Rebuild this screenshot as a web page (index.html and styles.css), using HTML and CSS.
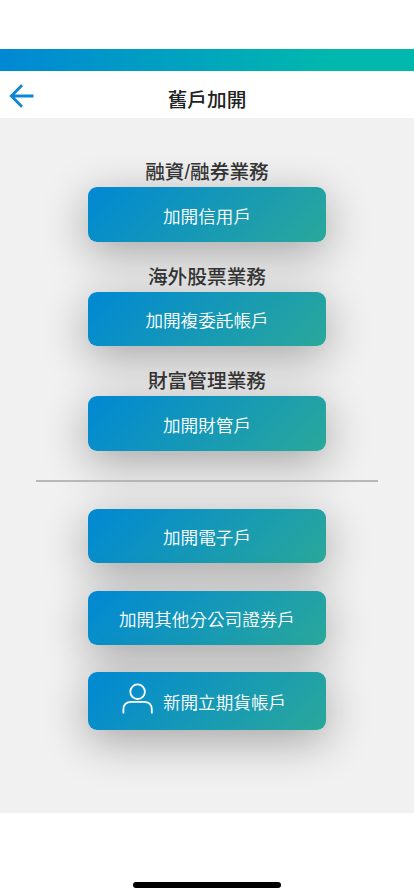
FILE: index.html
```html
<!DOCTYPE html>
<html lang="zh-Hant">
<head>
    <meta charset="UTF-8">
    <title>舊戶加開</title>
    <link rel="stylesheet" href="styles.css">
</head>
<body>
<div class="topBar"></div>
<div class="header">
    <a class="back" href="#">
        <svg width="26" height="26" viewBox="0 0 26 26">
            <path d="M14 2.2 L3.3 13 L14 23.8 M3.3 13 H25.5" fill="none" stroke="#0a88d0" stroke-width="2.8"/>
        </svg>
    </a>
    <h1>舊戶加開</h1>
</div>
<div class="content">
    <div class="group">
        <h2>融資/融券業務</h2>
        <a class="btn" href="#">加開信用戶</a>
    </div>
    <div class="group">
        <h2>海外股票業務</h2>
        <a class="btn" href="#">加開複委託帳戶</a>
    </div>
    <div class="group">
        <h2>財富管理業務</h2>
        <a class="btn" href="#">加開財管戶</a>
    </div>
    <hr>
    <div class="more">
        <a class="btn" href="#">加開電子戶</a>
        <a class="btn" href="#">加開其他分公司證券戶</a>
        <a class="btn btn-icon" href="#">
            <svg width="32" height="32" viewBox="0 0 32 32">
                <circle cx="15.6" cy="8.7" r="7.3"/>
                <path d="M1.4 30.5 V26.5 Q1.4 18.8 9.4 18.8 H22 Q29.8 18.8 29.8 26.5 V30.5"/>
            </svg>
            <span>新開立期貨帳戶</span>
        </a>
    </div>
</div>
<div class="footer">
    <div class="homeBar"></div>
</div>
</body>
</html>
```
FILE: styles.css
```css
* {
    margin: 0;
    padding: 0;
    box-sizing: border-box;
}

body {
    width: 414px;
    height: 896px;
    padding-top: 48.6px;
    background: #fff;
    font-family: "Noto Sans CJK TC", sans-serif;
    overflow: hidden;
}

a {
    text-decoration: none;
}

svg {
    display: block;
}

.topBar {
    height: 22.4px;
    background: linear-gradient(90deg, #0088d4, #00b8ae 80%);
}

.header {
    display: grid;
    grid-template-columns: 40px 1fr 40px;
    align-items: center;
    height: 47px;
}
.header .back {
    padding: 0 0 0 8px;
    margin-top: 3px;
}
.header h1 {
    text-align: center;
    font-size: 19.7px;
    line-height: 30px;
    font-weight: 500;
    color: #222;
    padding-top: 9px;
}

.content {
    height: 695px;
    padding-top: 39.5px;
    background: #f1f1f1;
}

.group {
    height: 104.5px;
}
.group h2 {
    height: 30px;
    line-height: 31px;
    text-align: center;
    font-family: "Liberation Sans", "Noto Sans CJK TC", sans-serif;
    font-size: 19.7px;
    font-weight: 500;
    color: #333;
}

.btn {
    display: flex;
    align-items: center;
    justify-content: center;
    width: 237.4px;
    height: 54.2px;
    margin: 0 auto;
    padding-top: 1px;
    border-radius: 9px;
    background: linear-gradient(135deg, #0088d4, #2aa89a);
    box-shadow: 0 11px 45px rgba(0, 0, 0, .32);
    color: #fff;
    font-size: 17.6px;
    font-weight: 350;
}

hr {
    width: 342px;
    height: 2px;
    margin: 9px auto 0;
    border: none;
    background: #b8b8b8;
}

.more {
    display: flex;
    flex-direction: column;
    gap: 27.4px;
    padding-top: 27px;
}
.btn-icon {
    height: 57.4px;
    gap: 9px;
    padding: 0 6px 0 0;
}
.btn-icon svg {
    margin-top: -4px;
    fill: none;
    stroke: #fff;
    stroke-width: 1.8;
}
.btn-icon span {
    padding-top: 1px;
}

.footer {
    height: 83px;
    padding-top: 69.5px;
    background: #fff;
    position: relative;
}
.homeBar {
    width: 148px;
    height: 5.2px;
    margin: 0 auto;
    border-radius: 3px;
    background: #000;
}
```
